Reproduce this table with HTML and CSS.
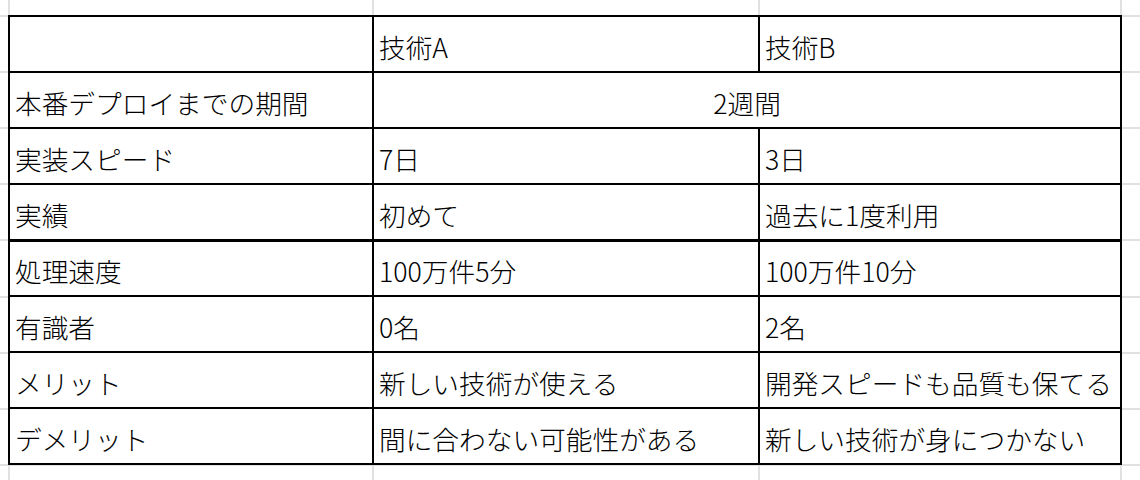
FILE: index.html
```html
<!DOCTYPE html>
<html lang="ja">
<head>
<meta charset="utf-8">
<title>技術比較</title>
<link rel="stylesheet" href="styles.css">
</head>
<body>
<div class="sheet">
  <div class="table">
    <div class="cell"></div>
    <div class="cell">技術A</div>
    <div class="cell">技術B</div>

    <div class="cell">本番デプロイまでの期間</div>
    <div class="cell merged">2週間</div>

    <div class="cell">実装スピード</div>
    <div class="cell">7日</div>
    <div class="cell">3日</div>

    <div class="cell thick">実績</div>
    <div class="cell thick">初めて</div>
    <div class="cell thick">過去に1度利用</div>

    <div class="cell">処理速度</div>
    <div class="cell">100万件5分</div>
    <div class="cell">100万件10分</div>

    <div class="cell">有識者</div>
    <div class="cell">0名</div>
    <div class="cell">2名</div>

    <div class="cell">メリット</div>
    <div class="cell">新しい技術が使える</div>
    <div class="cell">開発スピードも品質も保てる</div>

    <div class="cell">デメリット</div>
    <div class="cell">間に合わない可能性がある</div>
    <div class="cell">新しい技術が身につかない</div>
  </div>
</div>
</body>
</html>
```

FILE: styles.css
```css
html, body {
  margin: 0;
  padding: 0;
  background: #ffffff;
}

body {
  width: 1140px;
  height: 480px;
  overflow: hidden;
  font-family: "Noto Sans CJK JP", "Noto Sans", sans-serif;
  color: #000;
}

.sheet {
  width: 1140px;
  height: 480px;
  box-sizing: border-box;
  padding: 15px 0 0 8px;
  background-color: #fff;
  background-image:
    linear-gradient(#e1e1e1, #e1e1e1),
    linear-gradient(#e1e1e1, #e1e1e1),
    linear-gradient(#e1e1e1, #e1e1e1),
    linear-gradient(#e1e1e1, #e1e1e1),
    linear-gradient(#e1e1e1, #e1e1e1),
    linear-gradient(#e1e1e1, #e1e1e1),
    linear-gradient(#e1e1e1, #e1e1e1),
    linear-gradient(#e1e1e1, #e1e1e1),
    linear-gradient(#e1e1e1, #e1e1e1),
    linear-gradient(#e1e1e1, #e1e1e1),
    linear-gradient(#e1e1e1, #e1e1e1),
    linear-gradient(#e1e1e1, #e1e1e1),
    linear-gradient(#e1e1e1, #e1e1e1);
  background-repeat: no-repeat;
  background-size:
    2px 100%, 2px 100%, 2px 100%, 2px 100%,
    100% 2px, 100% 2px, 100% 2px, 100% 2px, 100% 2px,
    100% 2px, 100% 2px, 100% 2px, 100% 2px;
  background-position:
    8px 0, 372px 0, 758px 0, 1120px 0,
    0 15px, 0 71px, 0 127px, 0 183px, 0 239px,
    0 296px, 0 352px, 0 408px, 0 464px;
}

.table {
  display: grid;
  grid-template-columns: 364px 386px 362px;
  grid-auto-rows: 56px;
  width: 1114px;
  border-left: 2px solid #000;
  border-top: 2px solid #000;
  box-sizing: border-box;
  background: #fff;
}

.cell {
  box-sizing: border-box;
  border-right: 2px solid #000;
  border-bottom: 2px solid #000;
  display: flex;
  align-items: flex-end;
  padding: 0 2px 8px 5px;
  font-size: 26.7px;
  font-weight: 300;
  line-height: 1.2;
  white-space: nowrap;
  overflow: hidden;
}

.cell.thick {
  height: 57px;
  border-bottom-width: 3px;
}

.merged {
  grid-column: span 2;
  justify-content: center;
  padding-left: 0;
  padding-right: 0;
}
```
